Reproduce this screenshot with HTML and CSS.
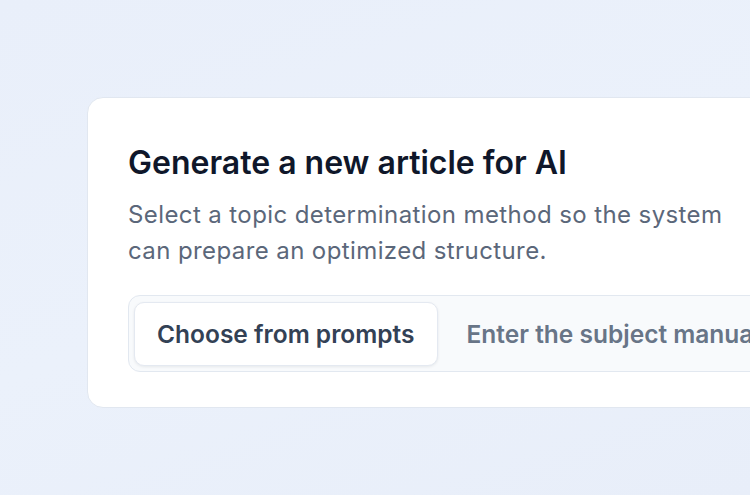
FILE: index.html
```html
<!DOCTYPE html>
<html lang="en">
<head>
<meta charset="utf-8">
<title>Generate article</title>
<link rel="stylesheet" href="styles.css">
</head>
<body>
<main class="stage">
  <section class="card">
    <h1 class="card-title">Generate a new article for AI</h1>
    <p class="card-text">Select a topic determination method so the system can prepare an optimized structure.</p>
    <div class="segmented" role="tablist">
      <button class="seg seg-active" role="tab">Choose from prompts</button>
      <button class="seg" role="tab">Enter the subject manually</button>
    </div>
  </section>
</main>
</body>
</html>
```

FILE: styles.css
```css
* { box-sizing: border-box; }
html, body {
  margin: 0;
  height: 100%;
  overflow: hidden;
}
body {
  background: linear-gradient(160deg, #e9effa 0%, #ebf1fb 50%, #e8eef9 100%);
  font-family: Inter, "Noto Sans", sans-serif;
}
.stage {
  padding: 97px 0 0 87px;
}
.card {
  width: 780px;
  background: #ffffff;
  border: 1px solid #e1e7f0;
  border-radius: 16px;
  padding: 45px 40px 35px 40px;
}
.card-title {
  margin: 0;
  font-size: 32px;
  line-height: 40px;
  font-weight: 600;
  color: #0f172a;
}
.card-text {
  margin: 14px 0 0 0;
  width: 612px;
  font-size: 24px;
  line-height: 36px;
  letter-spacing: 0.4px;
  color: #5b677a;
}
.segmented {
  margin-top: 26px;
  display: flex;
  gap: 6px;
  padding: 6px 5px 5px 5px;
  background: #f8fafc;
  border: 1px solid #e2e8f0;
  border-radius: 12px;
  width: 720px;
}
.seg {
  font-family: inherit;
  font-size: 24.5px;
  font-weight: 600;
  color: #687587;
  background: transparent;
  border: 1px solid transparent;
  border-radius: 10px;
  padding: 0 22px;
  height: 64px;
  white-space: nowrap;
  cursor: pointer;
}
.seg-active {
  background: #ffffff;
  color: #334155;
  border-color: #e4e9f1;
  box-shadow: 0 1px 3px rgba(15, 23, 42, 0.08);
}
```
